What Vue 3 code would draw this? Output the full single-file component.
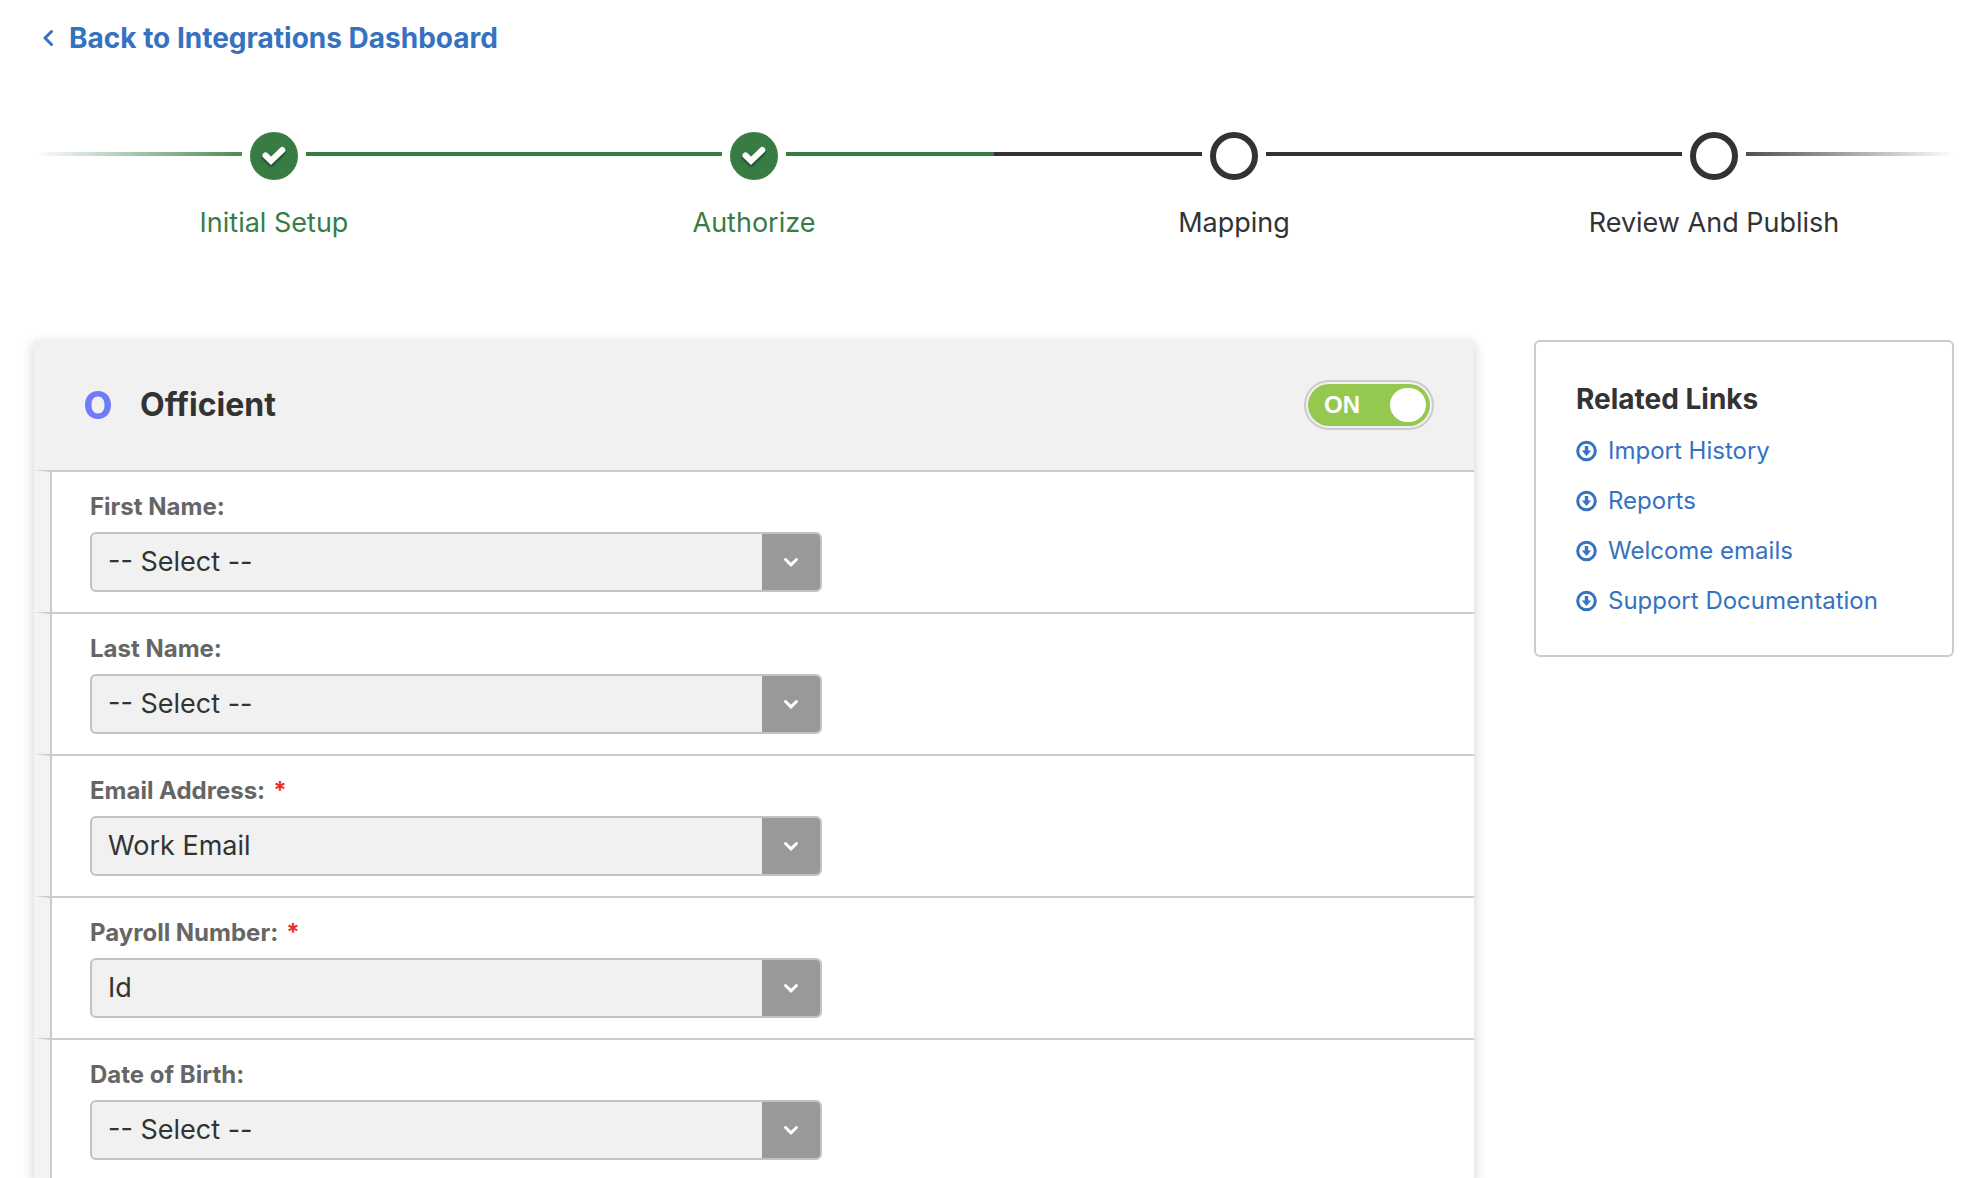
<script setup>
import { reactive, ref } from 'vue'

const steps = [
  { label: 'Initial Setup', done: true },
  { label: 'Authorize', done: true },
  { label: 'Mapping', done: false },
  { label: 'Review And Publish', done: false },
]

const fields = reactive([
  { id: 'first-name', label: 'First Name:', required: false, value: '-- Select --' },
  { id: 'last-name', label: 'Last Name:', required: false, value: '-- Select --' },
  { id: 'email-address', label: 'Email Address:', required: true, value: 'Work Email' },
  { id: 'payroll-number', label: 'Payroll Number:', required: true, value: 'Id' },
  { id: 'date-of-birth', label: 'Date of Birth:', required: false, value: '-- Select --' },
])

const options = ['-- Select --', 'Work Email', 'Id']
const links = ['Import History', 'Reports', 'Welcome emails', 'Support Documentation']
const enabled = ref(true)
</script>

<template>
  <div class="page">
    <a class="back" href="#">
      <svg class="back-icon" viewBox="0 0 12 18" aria-hidden="true">
        <path d="M9.500 2.500 3 9l6.500 6.500" />
      </svg>
      <span>Back to Integrations Dashboard</span>
    </a>

    <ol class="steps">
      <li v-for="step in steps" :key="step.label" class="step" :class="{ done: step.done }">
        <div class="track">
          <span class="line before"></span>
          <span class="dot">
            <svg v-if="step.done" class="check" viewBox="0 0 48 48" aria-hidden="true">
              <path d="M15.500 23.500 21 28.800 32.300 18" />
            </svg>
          </span>
          <span class="line after"></span>
        </div>
        <span class="step-label">{{ step.label }}</span>
      </li>
    </ol>

    <div class="columns">
      <main class="card">
        <header class="card-head">
          <svg class="brand" viewBox="0 0 28 30" aria-hidden="true">
            <path
              fill-rule="evenodd"
              d="M14 1C21.500 1 27 6.500 27 15s-5.500 14-13 14S1 23.500 1 15 6.500 1 14 1zm0 5.500c-4 0-6.500 3-6.500 8.500s2.500 8.500 6.500 8.500 6.500-3 6.500-8.500-2.500-8.500-6.500-8.500z"
            />
          </svg>
          <h1>Officient</h1>
          <label class="toggle">
            <input v-model="enabled" type="checkbox" role="switch" aria-label="Officient integration" />
            <span class="toggle-fill">
              <span>ON</span>
              <span class="knob"></span>
            </span>
          </label>
        </header>

        <section v-for="field in fields" :key="field.id" class="row">
          <div class="row-body">
            <label :for="field.id">{{ field.label }}<span v-if="field.required" class="star">*</span></label>
            <div class="select">
              <select :id="field.id" v-model="field.value">
                <option v-for="option in options" :key="option">{{ option }}</option>
              </select>
              <span class="arrow">
                <svg viewBox="0 0 16 10" aria-hidden="true"><path d="M2.500 2.500 8 7.800 13.500 2.500" /></svg>
              </span>
            </div>
          </div>
        </section>
      </main>

      <aside class="related">
        <h2>Related Links</h2>
        <ul>
          <li v-for="link in links" :key="link">
            <a href="#">
              <svg class="link-icon" viewBox="0 0 22 22" aria-hidden="true">
                <circle cx="10.500" cy="11" r="8.800" />
                <path d="M8.800 6h3.400v4.500h3L10.500 16 5.800 10.500h3z" />
              </svg>
              <span>{{ link }}</span>
            </a>
          </li>
        </ul>
      </aside>
    </div>
  </div>
</template>

<style>
body {
  margin: 0;
  background: #fff;
}
</style>

<style scoped>
.page {
  box-sizing: border-box;
  height: 100vh;
  overflow: hidden;
  padding: 20px 20px 0 34px;
  color: #333;
  font-family: Inter, "Liberation Sans", sans-serif;
  font-size: 27px;
  line-height: 36px;
}

.page * {
  box-sizing: border-box;
}

a {
  color: #3572c0;
  text-decoration: none;
}

.back {
  display: inline-flex;
  align-items: center;
  gap: 15px;
  padding-left: 8px;
  font-size: 28px;
  font-weight: 700;
  vertical-align: top;
}

.back-icon {
  width: 12px;
  height: 18px;
  fill: none;
  stroke: currentColor;
  stroke-width: 3;
  stroke-linecap: round;
  stroke-linejoin: round;
}

.steps {
  display: flex;
  margin: 76px 0 0;
  padding: 0;
  list-style: none;
}

.step {
  flex: 1;
  display: flex;
  flex-direction: column;
  align-items: center;
  gap: 25px;
}

.track {
  display: flex;
  gap: 8px;
  width: 100%;
}

.line {
  flex: 1;
  height: 4px;
  margin-top: 20px;
  background: #333;
}

.dot {
  width: 48px;
  height: 48px;
  border: 6px solid #333;
  border-radius: 50%;
}

.done {
  color: #377d43;
}

.done .line {
  background: #377d43;
}

.done .dot {
  border: 0;
  background: #377d43;
}

.step:first-child .before {
  background: linear-gradient(to right, #fff, #4b8a56);
}

.step:last-child .after {
  background: linear-gradient(to left, #fff, #505050);
}

.check {
  display: block;
  fill: none;
  stroke: #fff;
  stroke-width: 6;
  stroke-linecap: round;
  filter: drop-shadow(0 2px 1px rgba(0, 0, 0, 0.5));
}

.columns {
  display: flex;
  align-items: flex-start;
  gap: 60px;
  margin-top: 99px;
}

.card {
  flex: 1;
  background: #fff;
  box-shadow: 0 4px 12px rgba(0, 0, 0, 0.2);
}

.card-head {
  display: flex;
  align-items: center;
  height: 130px;
  padding: 0 40px 0 50px;
  background: #f1f1f1;
}

.brand {
  width: 28px;
  height: 30px;
  fill: #707cf7;
}

h1 {
  margin: 0 auto 0 28px;
  font-size: 32px;
  font-weight: 700;
}

.toggle {
  display: block;
  position: relative;
  width: 130px;
  height: 50px;
  padding: 2px;
  border: 2px solid #ccc;
  border-radius: 25px;
  cursor: pointer;
}

.toggle input {
  position: absolute;
  inset: 0;
  width: 100%;
  height: 100%;
  margin: 0;
  opacity: 0;
}

.toggle-fill {
  display: flex;
  align-items: center;
  justify-content: space-between;
  height: 42px;
  padding: 0 4px 0 16px;
  border-radius: 21px;
  background: #95c84f;
  color: #fff;
  font: bold 24px/42px "Liberation Sans", sans-serif;
}

.knob {
  width: 36px;
  height: 34px;
  border-radius: 18px;
  background: #fff;
}

.row {
  border-top: 2px solid #ccc;
  border-left: 16px solid #f3f3f3;
}

.row-body {
  padding: 19px 38px 20px;
  border-left: 2px solid #ccc;
}

.row-body label {
  display: block;
  margin-bottom: 9px;
  color: #666;
  font-size: 24px;
  font-weight: 700;
  line-height: 32px;
}

.star {
  margin-left: 8px;
  color: #ee2e24;
}

.select {
  position: relative;
  max-width: 732px;
}

select {
  appearance: none;
  display: block;
  width: 100%;
  height: 60px;
  padding: 0 76px 0 16px;
  border: 2px solid #c2c2c2;
  border-radius: 6px;
  background: #f1f1f1;
  color: #333;
  font: inherit;
}

.arrow {
  position: absolute;
  top: 2px;
  right: 2px;
  bottom: 2px;
  display: flex;
  align-items: center;
  justify-content: center;
  width: 58px;
  border-radius: 0 4px 4px 0;
  background: #999;
  pointer-events: none;
}

.arrow svg {
  width: 16px;
  height: 10px;
  fill: none;
  stroke: #fff;
  stroke-width: 3;
  stroke-linecap: round;
}

.related {
  width: 420px;
  padding: 39px 40px 29px;
  border: 2px solid #ccc;
  border-radius: 6px;
}

h2 {
  margin: 0;
  font-size: 28px;
  font-weight: 700;
}

.related ul {
  margin: 9px 0 0;
  padding: 0;
  list-style: none;
  font-size: 24px;
  line-height: 50px;
}

.related a {
  display: flex;
  align-items: center;
  gap: 10px;
}

.link-icon {
  width: 22px;
  height: 22px;
  fill: currentColor;
}

.link-icon circle {
  fill: none;
  stroke: currentColor;
  stroke-width: 3;
}
</style>
